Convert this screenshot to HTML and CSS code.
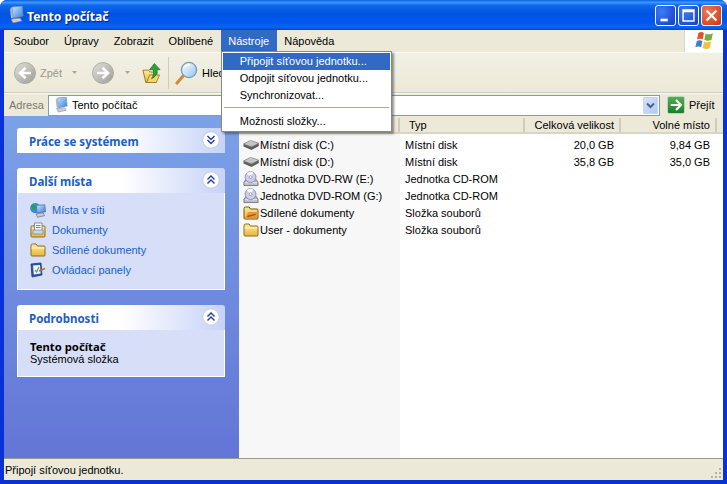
FILE: index.html
```html
<!DOCTYPE html>
<html lang="cs">
<head>
<meta charset="utf-8">
<title>Tento počítač</title>
<link rel="stylesheet" href="styles.css">
</head>
<body>
<svg class="defs" width="0" height="0">
  <defs>
    <linearGradient id="gScreen" x1="0" y1="0" x2="1" y2="1"><stop offset="0" stop-color="#cfe6ff"/><stop offset="1" stop-color="#2f7fe6"/></linearGradient>
    <linearGradient id="gFolder" x1="0" y1="0" x2="0" y2="1"><stop offset="0" stop-color="#ffeb9a"/><stop offset="1" stop-color="#e8b63a"/></linearGradient>
    <linearGradient id="gGrey" x1="0" y1="0" x2="1" y2="1"><stop offset="0" stop-color="#e2e2dc"/><stop offset="1" stop-color="#9d9d96"/></linearGradient>
    <linearGradient id="gGlass" x1="0" y1="0" x2="1" y2="1"><stop offset="0" stop-color="#ffffff"/><stop offset="1" stop-color="#8fc3f0"/></linearGradient>
    <linearGradient id="gDisk" x1="0" y1="0" x2="0" y2="1"><stop offset="0" stop-color="#ececec"/><stop offset="1" stop-color="#a0a0a0"/></linearGradient>
    <symbol id="i-pc" viewBox="0 0 16 18">
      <path d="M4 1 L14 0 L15 10 L5 12 Z" fill="url(#gScreen)" stroke="#7a8fb0" stroke-width=".8"/>
      <path d="M2 3 L4 1 L5 12 L3 12 Z" fill="#aab7cc"/>
      <path d="M3 13 L12 12 L14 15 L5 17 Z" fill="#c9ced8" stroke="#6f7a90" stroke-width=".6"/>
    </symbol>
    <symbol id="i-disk" viewBox="0.5 1 16 11">
      <path d="M1 6 L1 8 L9 11.5 L16.3 7.5 L16.3 5 Z" fill="#5c5c5c"/>
      <path d="M1 5.5 L8 2 L16.3 4.8 L9 8.8 Z" fill="url(#gDisk)" stroke="#6a6a6a" stroke-width=".7"/>
      <ellipse cx="8.4" cy="5.2" rx="3.8" ry="1.6" fill="#c4c4c4"/>
    </symbol>
    <symbol id="i-cd" viewBox="0 0 17 17">
      <path d="M1 12 L3 9 H14 L16 12 V15.5 H1 Z" fill="#b9bcc4" stroke="#5f636e" stroke-width=".8"/>
      <path d="M2 12.5 H15" stroke="#eceef2" stroke-width="1"/>
      <circle cx="8" cy="6.5" r="5.8" fill="#cfcbec" stroke="#7d7d99" stroke-width=".8"/>
      <path d="M8 6.5 L4 2.5 A5.8 5.8 0 0 1 11 1.6 Z" fill="#f7f7ff"/>
      <circle cx="8" cy="6.5" r="1.5" fill="#fff" stroke="#7d7d99" stroke-width=".7"/>
    </symbol>
    <symbol id="i-folder" viewBox="0 0 16 14">
      <path d="M1 2.5 Q1 1 2.5 1 H6 L7.5 3 H14 Q15 3 15 4 V12 Q15 13 14 13 H2 Q1 13 1 12 Z" fill="url(#gFolder)" stroke="#8f6c1c" stroke-width="1"/>
      <path d="M1.5 5 H14.5" stroke="#fff7cf" stroke-width="1"/>
    </symbol>
    <symbol id="i-shared" viewBox="0 0 16 14">
      <path d="M1 2.5 Q1 1 2.5 1 H6 L7.5 3 H14 Q15 3 15 4 V12 Q15 13 14 13 H2 Q1 13 1 12 Z" fill="url(#gFolder)" stroke="#6f5518" stroke-width="1"/>
      <path d="M2 12.5 L5 6 H15.5 L13.5 12.5 Z" fill="#e59a3a"/>
      <path d="M4.5 11 C6 8.5 10 10.5 12.5 8" stroke="#b8511a" stroke-width="1.5" fill="none"/>
    </symbol>
    <symbol id="i-network" viewBox="0 0 17 16">
      <circle cx="5.5" cy="6" r="5.4" fill="#2f8fd8"/>
      <path d="M1.5 3 Q5 1.5 6.5 5 Q4 9 1.5 6 Z" fill="#2f9e3c"/>
      <path d="M7 3 L15.8 2.5 L16.4 10 L7.5 11 Z" fill="url(#gScreen)" stroke="#5a6d90" stroke-width=".8"/>
      <path d="M6.5 12 L14 11 L15.5 14 L8 15.7 Z" fill="#c8ccd6" stroke="#5f6a80" stroke-width=".7"/>
    </symbol>
    <symbol id="i-docs" viewBox="0 0 16 16">
      <path d="M1 5 Q1 4 2 4 H14 Q15 4 15 5 V14 Q15 15 14 15 H2 Q1 15 1 14 Z" fill="url(#gFolder)" stroke="#8f6c1c" stroke-width="1"/>
      <path d="M4.5 1 H12 V11 H4.5 Z" fill="#fff" stroke="#6d82a8" stroke-width=".9"/>
      <path d="M3 8 H13 V12 H3 Z" fill="#c9d6ee" stroke="#6d82a8" stroke-width=".7"/>
      <path d="M6 3.5 H10.5 M6 5.5 H10.5" stroke="#5d78b8" stroke-width=".9"/>
    </symbol>
    <symbol id="i-panel" viewBox="0 0 16 16">
      <path d="M1 2 L11 1 L12 13 L2 15 Z" fill="#2c56a8" stroke="#1c3a78" stroke-width=".8"/>
      <path d="M3 3.5 L10 3 L10.6 11.5 L3.8 12.6 Z" fill="#f1f4fa"/>
      <path d="M5 8 L6.5 10 L9 5" stroke="#3fae4a" stroke-width="1.2" fill="none"/>
      <path d="M9 9 L15 6.5" stroke="#c0623a" stroke-width="1.4"/>
    </symbol>
    <symbol id="i-up" viewBox="0 0 20 22">
      <path d="M1 8 H7 L8.5 10 H16 L14.5 21 H4 Z" fill="url(#gFolder)" stroke="#8f6c1c" stroke-width=".9"/>
      <path d="M5 21 L8 13 H18.5 L15 21 Z" fill="#f7d768" stroke="#8f6c1c" stroke-width=".8"/>
      <path d="M13 1 L19 7.5 H16 C16 12 14.5 15 10 17 C12 14 12.5 11 12 7.5 H8 Z" fill="#2f9e3c" stroke="#15702a" stroke-width=".7"/>
    </symbol>
    <symbol id="i-search" viewBox="0 0 24 24">
      <path d="M9 14 L2 22" stroke="#d08a3c" stroke-width="3.2" stroke-linecap="round"/>
      <circle cx="14" cy="9" r="7.6" fill="url(#gGlass)" stroke="#7d98b3" stroke-width="1.3"/>
      <path d="M10 6 Q12 3.5 15 4" stroke="#fff" stroke-width="1.4" fill="none"/>
    </symbol>
    <symbol id="i-back" viewBox="0 0 22 22">
      <circle cx="11" cy="11" r="10.5" fill="url(#gGrey)" stroke="#a3a39c" stroke-width=".8"/>
      <path d="M17 11 H7 M11.5 5.8 L6 11 L11.5 16.2" stroke="#fff" stroke-width="2.6" fill="none"/>
    </symbol>
    <symbol id="i-forward" viewBox="0 0 22 22">
      <circle cx="11" cy="11" r="10.5" fill="url(#gGrey)" stroke="#a3a39c" stroke-width=".8"/>
      <path d="M5 11 H15 M10.5 5.8 L16 11 L10.5 16.2" stroke="#fff" stroke-width="2.6" fill="none"/>
    </symbol>
    <symbol id="i-caret" viewBox="0 0 5 3"><path d="M0 0 H5 L2.5 3 Z" fill="#a7a69c"/></symbol>
    <symbol id="i-collapse" viewBox="0 0 18 18">
      <circle cx="9" cy="9" r="8.2" fill="#fff" stroke="#c3cee9" stroke-width="1"/>
      <path d="M5.5 8.5 L9 5 L12.5 8.5 M5.5 12.5 L9 9 L12.5 12.5" stroke="#1f3f9c" stroke-width="1.4" fill="none"/>
    </symbol>
    <symbol id="i-expand" viewBox="0 0 18 18">
      <circle cx="9" cy="9" r="8.2" fill="#fff" stroke="#c3cee9" stroke-width="1"/>
      <path d="M5.5 5 L9 8.5 L12.5 5 M5.5 9 L9 12.5 L12.5 9" stroke="#1f3f9c" stroke-width="1.4" fill="none"/>
    </symbol>
  </defs>
</svg>

<div class="window">
  <header class="titlebar">
    <svg class="title-icon"><use href="#i-pc"/></svg>
    <span class="title-text">Tento počítač</span>
    <div class="win-buttons">
      <span class="win-btn"><svg viewBox="0 0 21 21"><rect x="5" y="14" width="8" height="3" fill="#fff"/></svg></span>
      <span class="win-btn"><svg viewBox="0 0 21 21"><path d="M4.5 4.5 H16.5 V16.5 H4.5 Z M4.5 6 H16.5" fill="none" stroke="#fff" stroke-width="1.6"/></svg></span>
      <span class="win-btn close"><svg viewBox="0 0 21 21"><path d="M5 5 L16 16 M16 5 L5 16" stroke="#fff" stroke-width="2.4"/></svg></span>
    </div>
  </header>

  <div class="content">
    <nav class="menubar">
      <span class="menu-item">Soubor</span>
      <span class="menu-item">Úpravy</span>
      <span class="menu-item">Zobrazit</span>
      <span class="menu-item">Oblíbené</span>
      <div class="menu-item active">Nástroje
        <div class="dropdown">
          <div class="dd-item selected">Připojit síťovou jednotku...</div>
          <div class="dd-item">Odpojit síťovou jednotku...</div>
          <div class="dd-item">Synchronizovat...</div>
          <div class="dd-sep"></div>
          <div class="dd-item">Možnosti složky...</div>
        </div>
      </div>
      <span class="menu-item">Nápověda</span>
      <div class="logo-box">
        <svg viewBox="0 0 20 19" class="logo">
          <path d="M4 2 Q7 0 9.5 2 L8.3 8 Q6 6.5 3 8 Z" fill="#e0552b"/>
          <path d="M11 2.5 Q14 4 18 2 L16.6 8.5 Q13 10 9.8 8.6 Z" fill="#74b13c"/>
          <path d="M2.7 9.5 Q5.5 8 8 9.5 L6.8 15.5 Q4 14 1.3 15.5 Z" fill="#3b7fd0"/>
          <path d="M9.5 10.2 Q13 11.4 16.3 10 L15 16.5 Q11.5 18 8.3 16.2 Z" fill="#f2c23a"/>
        </svg>
      </div>
    </nav>

    <div class="toolbar">
      <svg class="tb-nav"><use href="#i-back"/></svg>
      <span class="tb-label">Zpět</span>
      <svg class="tb-caret"><use href="#i-caret"/></svg>
      <svg class="tb-nav tb-forward"><use href="#i-forward"/></svg>
      <svg class="tb-caret tb-caret2"><use href="#i-caret"/></svg>
      <svg class="tb-up"><use href="#i-up"/></svg>
      <span class="tb-sep"></span>
      <svg class="tb-search"><use href="#i-search"/></svg>
      <span class="tb-hled">Hledat</span>
    </div>

    <div class="addressbar">
      <span class="addr-label">Adresa</span>
      <div class="addr-box">
        <svg class="addr-icon"><use href="#i-pc"/></svg>
        <span class="addr-text">Tento počítač</span>
        <span class="addr-drop"><svg viewBox="0 0 9 7" class="addr-chev"><path d="M1 1.5 L4.5 5 L8 1.5" stroke="#4d6185" stroke-width="2" fill="none"/></svg></span>
      </div>
      <span class="go-btn"><svg viewBox="0 0 18 18"><path d="M3 9 H14 M9 3.5 L14.5 9 L9 14.5" stroke="#fff" stroke-width="2.4" fill="none"/></svg></span>
      <span class="go-text">Přejít</span>
    </div>

    <main class="main">
      <aside class="sidebar">
        <section class="task">
          <div class="task-head"><span class="task-title">Práce se systémem</span><svg class="task-toggle"><use href="#i-expand"/></svg></div>
        </section>
        <section class="task">
          <div class="task-head"><span class="task-title">Další místa</span><svg class="task-toggle"><use href="#i-collapse"/></svg></div>
          <div class="task-body links">
            <a class="link"><svg class="link-icon"><use href="#i-network"/></svg>Místa v síti</a>
            <a class="link"><svg class="link-icon"><use href="#i-docs"/></svg>Dokumenty</a>
            <a class="link"><svg class="link-icon"><use href="#i-folder"/></svg>Sdílené dokumenty</a>
            <a class="link"><svg class="link-icon"><use href="#i-panel"/></svg>Ovládací panely</a>
          </div>
        </section>
        <section class="task">
          <div class="task-head"><span class="task-title">Podrobnosti</span><svg class="task-toggle"><use href="#i-collapse"/></svg></div>
          <div class="task-body details">
            <strong>Tento počítač</strong>
            <span>Systémová složka</span>
          </div>
        </section>
      </aside>

      <div class="list">
        <div class="list-head">
          <span class="col col-name"></span>
          <span class="col col-type">Typ</span>
          <span class="col col-num">Celková velikost</span>
          <span class="col col-num">Volné místo</span>
        </div>
        <div class="list-body">
          <div class="row"><span class="name"><svg class="row-icon"><use href="#i-disk"/></svg>Místní disk (C:)</span><span class="type">Místní disk</span><span class="num">20,0 GB</span><span class="num">9,84 GB</span></div>
          <div class="row"><span class="name"><svg class="row-icon"><use href="#i-disk"/></svg>Místní disk (D:)</span><span class="type">Místní disk</span><span class="num">35,8 GB</span><span class="num">35,0 GB</span></div>
          <div class="row"><span class="name"><svg class="row-icon"><use href="#i-cd"/></svg>Jednotka DVD-RW (E:)</span><span class="type">Jednotka CD-ROM</span><span class="num"></span><span class="num"></span></div>
          <div class="row"><span class="name"><svg class="row-icon"><use href="#i-cd"/></svg>Jednotka DVD-ROM (G:)</span><span class="type">Jednotka CD-ROM</span><span class="num"></span><span class="num"></span></div>
          <div class="row"><span class="name"><svg class="row-icon"><use href="#i-shared"/></svg>Sdílené dokumenty</span><span class="type">Složka souborů</span><span class="num"></span><span class="num"></span></div>
          <div class="row"><span class="name"><svg class="row-icon"><use href="#i-folder"/></svg>User - dokumenty</span><span class="type">Složka souborů</span><span class="num"></span><span class="num"></span></div>
        </div>
      </div>
    </main>

    <footer class="statusbar">
      <span>Připojí síťovou jednotku.</span>
      <svg class="grip" viewBox="0 0 12 12"><path d="M9 0h2v2H9zM5 4h2v2H5zM9 4h2v2H9zM1 8h2v2H1zM5 8h2v2H5zM9 8h2v2H9z" fill="#b5b2a0"/></svg>
    </footer>
  </div>
</div>
</body>
</html>
```

FILE: styles.css
```css
* { box-sizing: border-box; }
html, body { margin: 0; padding: 0; width: 727px; height: 484px; overflow: hidden; }
body { font-family: "Liberation Sans", Arial, sans-serif; font-size: 11px; color: #000; }
.defs { display: block; height: 0; }

.window {
  width: 727px; height: 484px;
  display: flex; flex-direction: column;
  background: #0831d9;
  border-radius: 7px 7px 0 0;
}
.titlebar {
  height: 30px; flex: none;
  display: flex; align-items: center;
  padding: 0 5px 0 8px;
  border-radius: 7px 7px 0 0;
  background: linear-gradient(180deg, #0a5fe0 0%, #3d95ff 8%, #0f68ea 18%, #0054e3 45%, #0058ee 75%, #0a66f0 90%, #0048cc 100%);
}
.title-icon { width: 16px; height: 18px; margin-right: 3px; }
.title-text {
  font-family: "Noto Sans", sans-serif;
  font-weight: 700; font-size: 12.2px; color: #fff;
  text-shadow: 1px 1px 1px #0a1f8a;
  margin-top: 3px;
}
.win-buttons { margin-left: auto; margin-top: 1px; display: flex; gap: 2px; }
.win-btn {
  width: 21px; height: 21px; display: block;
  border: 1px solid #fff; border-radius: 3px;
  background: radial-gradient(circle at 30% 30%, #3f7df0, #1f4fd8 70%, #1a3fb8);
}
.win-btn svg { display: block; width: 19px; height: 19px; }
.win-btn.close { background: radial-gradient(circle at 30% 30%, #e8785a, #d84a28 70%, #b83a1a); }

.content {
  flex: 1; margin: 0 4px 4px;
  display: flex; flex-direction: column;
  background: #ece9d8;
  min-height: 0;
}
.menubar {
  height: 23px; flex: none;
  display: flex; align-items: stretch;
  padding-left: 2px;
  border-bottom: 1px solid #fbfaf4;
  background: #ece9d8;
}
.menu-item {
  position: relative;
  display: flex; align-items: center;
  padding: 0 7.5px;
  height: 22px;
}
.menu-item.active { background: #316ac5; color: #fff; height: 21px; }
.dropdown {
  position: absolute; z-index: 5; left: 0; top: 21px;
  width: 171px;
  background: #fff; color: #000;
  border: 1px solid #8a8a80;
  padding: 1px;
  box-shadow: 2px 2px 2px rgba(60,60,60,.55);
}
.dd-item { height: 17px; line-height: 17px; padding-left: 17px; white-space: nowrap; }
.dd-item.selected { background: #316ac5; color: #fff; }
.dd-sep { height: 1px; background: #aca899; margin: 3px 1px 5px; }
.logo-box {
  margin-left: auto; width: 39px; height: 22px;
  background: #fff;
  border-left: 1px solid #d8d5c5;
  display: flex; align-items: center; justify-content: center;
}
.logo { width: 21px; height: 20px; }

.toolbar {
  height: 40px; flex: none;
  display: flex; align-items: center;
  padding-left: 10px;
  border-bottom: 1px solid #d0cdbc;
  background: linear-gradient(180deg, #f2f0e4, #ece9d8);
  white-space: nowrap;
  overflow: hidden;
}
.tb-nav { width: 22px; height: 22px; flex: none; }
.tb-label { margin-left: 4px; width: 27px; color: #9a988c; }
.tb-caret { width: 5px; height: 3px; flex: none; margin-left: 5px; }
.tb-forward { margin-left: 15px; }
.tb-caret2 { margin-left: 11px; }
.tb-up { width: 19px; height: 22px; flex: none; margin-left: 12px; }
.tb-sep { width: 1px; height: 32px; background: #cfccba; margin: 0 6px 0 7px; flex: none; }
.tb-search { width: 24px; height: 24px; flex: none; }
.tb-hled { color: #000; margin-left: 3px; }

.addressbar {
  height: 23px; flex: none;
  display: flex; align-items: center;
  padding-left: 5px;
  background: #ece9d8;
  border-top: 1px solid #f8f7f0;
}
.addr-label { width: 39px; color: #7a786c; flex: none; }
.addr-box {
  width: 612px; height: 21px; flex: none;
  display: flex; align-items: center;
  background: #fff;
  border: 1px solid #7f9db9;
  padding-left: 5px;
}
.addr-icon { width: 14px; height: 16px; flex: none; margin-right: 4px; }
.addr-drop {
  margin-left: auto; width: 15px; height: 17px; margin-right: 1px;
  background: linear-gradient(135deg, #d4e2fb, #b3c9f4);
  border: 1px solid #c6d6f6; border-radius: 1px;
  display: flex; align-items: center; justify-content: center;
}
.addr-chev { width: 9px; height: 7px; }
.go-btn {
  width: 18px; height: 18px; flex: none; margin-left: 7px;
  background: linear-gradient(180deg, #4fb04f, #1f7d2a);
  border: 1px solid #b9d9ba; border-radius: 2px;
  display: block;
}
.go-btn svg { display: block; width: 16px; height: 16px; }
.go-text { margin-left: 4px; }

.main { flex: 1; display: flex; min-height: 0; background: #fff; }
.sidebar {
  width: 235px; flex: none;
  padding: 12px 14px 0 13px;
  background: linear-gradient(180deg, #7ba2e7, #6375d6);
  display: flex; flex-direction: column; gap: 15px;
}
.task-head {
  height: 25px;
  display: flex; align-items: center; justify-content: space-between;
  padding: 0 5px 0 12px;
  border-radius: 3px 3px 0 0;
  background: linear-gradient(90deg, #fff 0%, #fff 50%, #c6d3f7 100%);
}
.task-title {
  font-family: "Noto Sans", sans-serif;
  color: #215dc6; font-weight: 700; font-size: 11.5px;
  margin-top: 2px;
}
.task-toggle { width: 18px; height: 18px; flex: none; margin-top: -2px; }
.task-body {
  background: #d6dff7;
  border: 1px solid #fff; border-top: 0;
}
.links { height: 97px; padding: 9px 0 0 12px; display: flex; flex-direction: column; gap: 4px; }
.link { height: 16px; display: flex; align-items: center; color: #215dc6; }
.link-icon { width: 16px; height: 16px; flex: none; margin-right: 6px; }
.details { height: 47px; padding: 10px 0 0 12px; display: flex; flex-direction: column; line-height: 13px; }
.details strong { font-family: "Noto Sans", sans-serif; font-weight: 700; font-size: 11.3px; }

.list { flex: 1; display: flex; flex-direction: column; min-width: 0; }
.list-head {
  height: 18px; flex: none;
  display: grid; grid-template-columns: 161px 125px 96px 96px 6px;
  background: #ece9d8;
  border-bottom: 2px solid #d8d5c5;
}
.col { padding: 0 5px; border-right: 2px solid #d0cdbc; height: 14px; line-height: 14px; margin-top: 2px; }
.col-type { padding-left: 9px; }
.col-num { text-align: right; }
.list-body {
  flex: 1;
  background: linear-gradient(90deg, #f7f7f7 0, #f7f7f7 161px, #fff 161px);
  padding: 2px 0 0 1px;
}
.row {
  height: 17px;
  display: grid; grid-template-columns: 160px 124px 96px 96px;
  align-items: center;
  white-space: nowrap;
}
.name { display: flex; align-items: center; padding-left: 3px; }
.row-icon { width: 16px; height: 16px; flex: none; margin-right: 1px; }
.type { padding-left: 5px; }
.num { text-align: right; padding-right: 6px; }

.statusbar {
  height: 22px; flex: none;
  display: flex; align-items: center; justify-content: space-between;
  padding: 0 1px 0 1px;
  background: #ece9d8;
  border-top: 1px solid #9c9a8c;
}
.grip { width: 12px; height: 12px; align-self: flex-end; }
```
